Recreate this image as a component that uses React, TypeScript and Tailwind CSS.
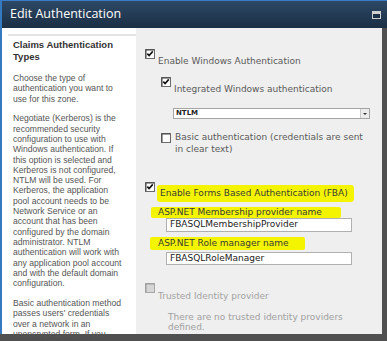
import React from "react";

const LEFT_FONT = { fontFamily: '"Liberation Sans", Arial, sans-serif' };
const RIGHT_FONT = { fontFamily: '"DejaVu Sans", Verdana, sans-serif' };

const PARAGRAPHS = [
  ["Choose the type of", "authentication you want to", "use for this zone."],
  [
    "Negotiate (Kerberos) is the",
    "recommended security",
    "configuration to use with",
    "Windows authentication. If",
    "this option is selected and",
    "Kerberos is not configured,",
    "NTLM will be used. For",
    "Kerberos, the application",
    "pool account needs to be",
    "Network Service or an",
    "account that has been",
    "configured by the domain",
    "administrator. NTLM",
    "authentication will work with",
    "any application pool account",
    "and with the default domain",
    "configuration.",
  ],
  [
    "Basic authentication method",
    "passes users' credentials",
    "over a network in an",
    "unencrypted form. If you",
  ],
];

function CheckBox({ checked = false, disabled = false }: { checked?: boolean; disabled?: boolean }) {
  return (
    <svg width="10" height="10" viewBox="0 0 10 10" className="shrink-0 block">
      <rect x="0.5" y="0.5" width="9" height="9" fill={disabled ? "#d6d6d6" : "#ffffff"} stroke={disabled ? "#a8a8a8" : "#6a6a6a"} />
      <path d="M1 1 H9 M1 1 V9" stroke={disabled ? "#9a9a9a" : "#404040"} strokeWidth="1" />
      {checked && <path d="M2.3 4.6 L4.1 6.6 L7.8 2.4" fill="none" stroke="#111" strokeWidth="1.6" />}
    </svg>
  );
}

export default function App() {
  return (
    <div className="w-[387px] h-[341px] overflow-hidden flex flex-col border-t border-[#3b7dc4] bg-[#505050]">
      {/* title bar */}
      <div className="flex h-[27px] shrink-0 items-center justify-between border-l-2 border-[#3579c0] bg-gradient-to-b from-[#2d4866] to-[#1b2f45] pl-[8px] pr-[6px]">
        <span className="text-[12.5px] text-white" style={{ fontFamily: '"Open Sans", "Liberation Sans", sans-serif' }}>
          Edit Authentication
        </span>
        <div className="flex h-[8px] w-[9px] flex-col border border-[#cfcfcf] bg-[#1d3048]">
          <div className="h-[2px] bg-[#cfcfcf]" />
        </div>
      </div>

      <div className="flex h-[306px] shrink-0 mr-[5px] border-l-2 border-[#3579c0]">
        {/* left description column */}
        <div className="w-[134px] shrink-0 bg-white pt-[6px]" style={LEFT_FONT}>
          <div className="ml-[6px] h-[2px] bg-[#e4e4e4]" />
          <div className="pl-[11px] pt-[3px]">
            <div className="text-[9.5px] font-bold leading-[11.5px] text-[#333]">
              <div>Claims Authentication</div>
              <div>Types</div>
            </div>
            <div className="mt-[11px] text-[8.6px] leading-[10.3px] text-[#555]">
              {PARAGRAPHS.map((lines, i) => (
                <div key={i} className="mb-[9.5px] whitespace-nowrap">
                  {lines.map((l) => (
                    <div key={l}>{l}</div>
                  ))}
                </div>
              ))}
            </div>
          </div>
        </div>

        {/* right settings column */}
        <div className="flex-1 whitespace-nowrap bg-[#efefef] pl-[9px] pt-[21px] text-[9px] text-[#5a5a5a]" style={RIGHT_FONT}>
          <div className="flex items-start">
            <CheckBox checked />
            <span className="ml-[3px] mt-[7px] leading-[10px]">Enable Windows Authentication</span>
          </div>

          <div className="ml-[16px] mt-[11px]">
            <div className="flex items-start">
              <CheckBox checked />
              <span className="ml-[3px] mt-[7px] leading-[10px]">Integrated Windows authentication</span>
            </div>
            <div className="ml-[12px] mt-[14px] flex h-[11px] w-[197px] items-center justify-between border border-[#a5a5a5] bg-white pl-[2px]">
              <span className="text-[7px] font-bold leading-[9px] text-[#222]">NTLM</span>
              <div className="flex h-[9px] w-[9px] items-center justify-center border-l border-[#c9c9c9] bg-[#ececec]">
                <div className="h-0 w-0 border-x-[2px] border-t-[2px] border-x-transparent border-t-[#333]" />
              </div>
            </div>
            <div className="mt-[12px] flex items-start">
              <div className="mt-[2px]">
                <CheckBox />
              </div>
              <span className="ml-[4px] leading-[12px]">
                Basic authentication (credentials are sent
                <br />
                in clear text)
              </span>
            </div>
          </div>

          <div className="mt-[27px] flex items-start">
            <CheckBox checked />
            <span className="ml-[2px] mt-[3px] rounded-[3px] bg-[#f4f400] pl-[3px] pr-[6px] leading-[17px] text-[#3a3a3a]">
              Enable Forms Based Authentication (FBA)
            </span>
          </div>
          <div className="ml-[6px] mt-[5px] w-[190px] rounded-[2px] bg-[#f4f400] pl-[7px] leading-[11px] text-[#3a3a3a]">
            ASP.NET Membership provider name
          </div>
          <div className="ml-[21px] flex h-[14px] w-[186px] items-center border border-[#b0b0b0] bg-white pl-[3px] text-[#222]">
            FBASQLMembershipProvider
          </div>
          <div className="ml-[5px] mt-[5px] w-[155px] rounded-[2px] bg-[#f4f400] pl-[8px] leading-[13px] text-[#3a3a3a]">
            ASP.NET Role manager name
          </div>
          <div className="ml-[21px] mt-[2px] flex h-[13px] w-[186px] items-center border border-[#b0b0b0] bg-white pl-[3px] text-[#222]">
            FBASQLRoleManager
          </div>

          <div className="mt-[18px] flex items-start">
            <CheckBox disabled />
            <span className="ml-[3px] mt-[8px] leading-[10px] text-[#a3a3a3]">Trusted Identity provider</span>
          </div>
          <div className="ml-[23px] mt-[11px] leading-[10px] text-[#a0a0a0]">
            There are no trusted identity providers
            <br />
            defined.
          </div>
        </div>
      </div>
    </div>
  );
}
